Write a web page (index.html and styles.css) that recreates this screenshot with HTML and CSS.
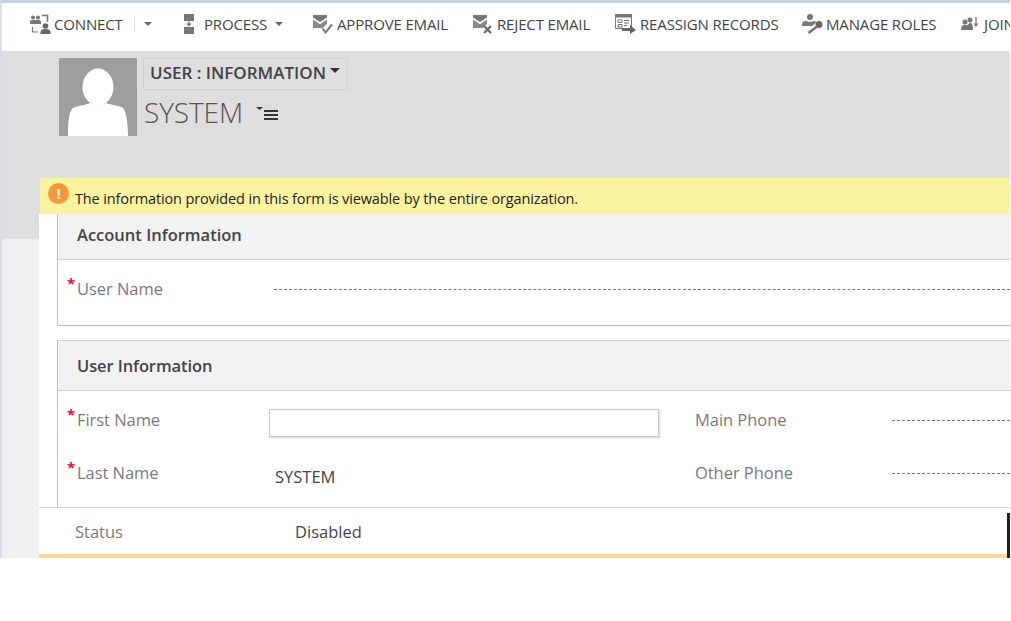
FILE: index.html
```html
<!DOCTYPE html>
<html lang="en">
<head>
<meta charset="utf-8">
<title>User: Information</title>
<link rel="stylesheet" href="styles.css">
</head>
<body>
<div class="app">
  <nav class="commandbar">
    <span class="cmd cmd-connect">
      <svg class="ico" width="21" height="20" viewBox="0 0 21 20"><circle cx="3" cy="3.500" r="2" fill="#777"/><circle cx="8" cy="3.500" r="2" fill="#777"/><path d="M0 10V8c0-1.500 1-2 3-2h5c2 0 3 .5 3 2v2z" fill="#777"/><circle cx="15.500" cy="12" r="2.800" fill="#666"/><path d="M10.500 20v-2c0-2 2-3 5-3s5 1 5 3v2z" fill="#666"/><path d="M12 1.500h5.500V8" fill="none" stroke="#777" stroke-width="1.600"/><path d="M8 18H2.500v-5" fill="none" stroke="#777" stroke-width="1.200"/></svg>
      CONNECT<span class="sep"></span><span class="caret"></span>
    </span>
    <span class="cmd cmd-process">
      <svg class="ico" width="10" height="20" viewBox="0 0 10 20"><rect x="0" y="0" width="10" height="7" fill="#777"/><rect x="0" y="13" width="10" height="7" fill="#777"/><path d="M5 7.500v3.500" stroke="#666" stroke-width="1.200"/><path d="M2.500 9.500h5L5 12.500z" fill="#666"/></svg>
      PROCESS<span class="caret caret-process"></span>
    </span>
    <span class="cmd cmd-approve">
      <svg class="ico" width="20" height="19" viewBox="0 0 20 19"><path d="M0 0h14v2.500L7 7 0 2.500z" fill="#777"/><path d="M0 4.500l7 4.500 7-4.500V9l-4.500 4H0z" fill="#888"/><path d="M9.500 13.500l3 4 6.500-8" fill="none" stroke="#777" stroke-width="2"/></svg>
      APPROVE EMAIL
    </span>
    <span class="cmd cmd-reject">
      <svg class="ico" width="20" height="19" viewBox="0 0 20 19"><path d="M0 0h14v2.500L7 7 0 2.500z" fill="#777"/><path d="M0 4.500l7 4.500 7-4.500V9l-4.500 4H0z" fill="#888"/><path d="M11 11l7 7M18 11l-7 7" fill="none" stroke="#666" stroke-width="2.200"/></svg>
      REJECT EMAIL
    </span>
    <span class="cmd cmd-reassign">
      <svg class="ico" width="21" height="20" viewBox="0 0 21 20"><path d="M.5.500h16v14H.5z" fill="#fff" stroke="#777"/><rect y="0" width="17" height="3.500" fill="#777"/><path d="M3 6h4v2.500H3zM3 10.500h4V13H3z" fill="none" stroke="#777"/><path d="M9 6.500h5M9 9h5M9 11.500h3" fill="none" stroke="#777"/><path d="M7 14.500h8V11l6 5-6 4v-3H7z" fill="#666"/></svg>
      REASSIGN RECORDS
    </span>
    <span class="cmd cmd-roles">
      <svg class="ico" width="21" height="20" viewBox="0 0 21 20"><circle cx="8" cy="3" r="3" fill="#777"/><path d="M0 12v-2c0-2 2-3 4-3 2 1 6 1 8 0 1 0 2 .5 2 1.500L10 12z" fill="#777"/><circle cx="17" cy="10.500" r="3.500" fill="#666"/><path d="M15 12.500l-8.500 6.500" stroke="#777" stroke-width="2.600"/></svg>
      MANAGE ROLES
    </span>
    <span class="cmd cmd-join">
      <svg class="ico" width="18" height="16" viewBox="0 0 18 16"><circle cx="4" cy="6" r="2.500" fill="#777"/><circle cx="9" cy="4" r="2.500" fill="#777"/><path d="M0 14c0-3 1-5 4-5 1 0 2 0 2 .5 1-1 2-2.500 3-2.500 2 0 3 2 3 7z" fill="#777"/><path d="M15 1v9" stroke="#777" stroke-width="1.300"/><path d="M12.500 7.500h5L15 11z" fill="#777"/></svg>
      JOIN TEAMS
    </span>
  </nav>

  <main class="workspace">
    <header class="record-head">
      <div class="avatar">
        <svg width="78" height="78" viewBox="0 0 78 78"><ellipse cx="39" cy="29" rx="15.500" ry="18.500" fill="#fff"/><path d="M9 78c0-14 1-25 5-28 6-3 13-3 17-5 4 2 12 2 16 0 5 2 12 2 17 5 3 3 5 14 5 28z" fill="#fff"/></svg>
      </div>
      <div class="record-title">
        <span class="form-select">USER : INFORMATION<span class="form-caret"></span></span>
        <div class="record-name">
          <span class="name-text">SYSTEM</span>
          <svg class="list-ico" width="23" height="13" viewBox="0 0 23 13"><path d="M0 0h7l-3.500 3z" fill="#333"/><path d="M8 3h14v2H8zM8 7h14v2H8zM8 11h14v2H8z" fill="#333"/></svg>
        </div>
      </div>
    </header>

    <div class="notice">
      <span class="notice-ico">!</span>
      <span class="notice-text">The information provided in this form is viewable by the entire organization.</span>
    </div>

    <div class="sheet">
      <div class="sheet-scroll">
        <section class="section section-account">
          <h2 class="section-title title-account">Account Information</h2>
          <div class="row row-account">
            <span class="req">*</span><span class="label">User Name</span>
            <span class="dashes dashes-user"></span>
          </div>
        </section>

        <section class="section section-user">
          <h2 class="section-title title-user">User Information</h2>
          <div class="grid">
            <div class="row">
              <span class="req">*</span><span class="label">First Name</span>
              <span class="textbox"></span>
            </div>
            <div class="row row-right">
              <span class="label label-right">Main Phone</span>
              <span class="dashes"></span>
            </div>
            <div class="row">
              <span class="req">*</span><span class="label">Last Name</span>
              <span class="value">SYSTEM</span>
            </div>
            <div class="row row-right">
              <span class="label label-right">Other Phone</span>
              <span class="dashes"></span>
            </div>
          </div>
        </section>
      </div>

      <footer class="statusbar">
        <span class="status-label">Status</span>
        <span class="status-value">Disabled</span>
        <span class="status-end"></span>
      </footer>
    </div>
  </main>
</div>
</body>
</html>
```

FILE: styles.css
```css
* { box-sizing: border-box; }
html, body { margin: 0; height: 100%; background: #fff; overflow: hidden; }
body { font-family: "Open Sans", "Noto Sans", sans-serif; color: #444; }

.app {
  width: 1010px;
  height: 558px;
  border-top: 3px solid #c5d0e3;
  border-left: 2px solid #d4deee;
  display: flex;
  flex-direction: column;
  overflow: hidden;
}

/* command bar */
.commandbar {
  height: 48px;
  flex: none;
  background: #fff;
  display: flex;
  align-items: center;
  padding: 0 0 6px 28px;
  white-space: nowrap;
  overflow: hidden;
  font-size: 15px;
  letter-spacing: -.15px;
  color: #444;
}
.cmd { display: inline-flex; align-items: center; flex: none; }
.ico { flex: none; margin-right: 3px; }
.cmd-connect { width: 154px; }
.cmd-process { width: 129px; }
.cmd-process .ico { margin-right: 10px; }
.cmd-approve { width: 160px; }
.cmd-approve .ico, .cmd-reject .ico, .cmd-reassign .ico { margin-right: 4px; }
.cmd-reject { width: 142px; }
.cmd-reassign { width: 187px; }
.cmd-roles { width: 159px; }
.cmd-join .ico { margin-right: 5px; }
.sep { width: 1px; height: 15px; background: #ddd; margin: 0 9px 0 11px; }
.caret { width: 0; height: 0; border: 4px solid transparent; border-top: 4px solid #666; border-bottom: 0; }
.caret-process { margin-left: 8px; }

/* workspace */
.workspace {
  flex: 1;
  min-height: 0;
  display: flex;
  flex-direction: column;
  background: linear-gradient(#dedede 188px, #f0f0f0 188px);
}
.record-head {
  height: 127px;
  flex: none;
  display: flex;
  padding: 7px 0 0 57px;
}
.avatar { width: 78px; height: 78px; background: #9e9e9e; flex: none; }
.avatar svg { display: block; }
.record-title { margin-left: 6px; }
.form-select {
  display: inline-flex;
  align-items: center;
  height: 32px;
  padding: 0 7px 3px 6px;
  border: 1px solid #d2d2d2;
  font-size: 17px;
  font-weight: 600;
  color: #444;
}
.form-caret { margin-left: 4px; margin-bottom: 4px; width: 0; height: 0; border: 5px solid transparent; border-top: 5px solid #333; border-bottom: 0; }
.record-name { display: flex; align-items: center; margin-top: 3px; padding-left: 1px; }
.name-text { font-size: 28px; font-weight: 300; color: #555; letter-spacing: -.1px; line-height: 38px; }
.list-ico { margin: 2px 0 0 13px; }

/* notice */
.notice {
  height: 36px;
  flex: none;
  margin-left: 38px;
  background: #fcf3a1;
  display: flex;
  align-items: center;
  padding-left: 8px;
  font-size: 14.500px;
  letter-spacing: -.13px;
  color: #222;
}
.notice-text { margin-top: 4px; }
.notice-ico {
  width: 21px;
  height: 21px;
  border-radius: 50%;
  background: #f8973a;
  color: #fff;
  font-weight: 700;
  font-size: 15px;
  display: flex;
  align-items: center;
  justify-content: center;
  margin-right: 6px;
  margin-top: -6px;
}

/* sheet */
.sheet {
  flex: 1;
  min-height: 0;
  margin-left: 37px;
  background: #fff;
  border-bottom: 4px solid #fad79b;
  display: flex;
  flex-direction: column;
}
.sheet-scroll { flex: 1; min-height: 0; overflow: hidden; padding-left: 18px; }
.section { border-left: 1px solid #bcc2c4; border-bottom: 1px solid #bcc2c4; }
.section-account { height: 112px; }
.section-user { margin-top: 14px; height: 170px; border-top: 1px solid #d0d0d0; }
.section-title {
  margin: 0;
  background: #f2f2f2;
  border-bottom: 1px solid #d2d2d2;
  padding-left: 19px;
  font-size: 16.500px;
  font-weight: 600;
  color: #444;
  display: flex;
  align-items: center;
}
.title-account { height: 46px; padding-bottom: 4px; }
.title-user { height: 50px; letter-spacing: -.1px; }

.row {
  height: 53px;
  display: flex;
  align-items: flex-start;
  padding: 18px 0 0 9px;
  font-size: 16.500px;
  letter-spacing: -.05px;
}
.row-account { height: 65px; }
.req { width: 10px; color: #e81123; font-weight: 700; font-size: 15px; line-height: 18px; flex: none; margin-top: -4px; }
.label { width: 187px; flex: none; color: #7a7a7a; line-height: 22px; }
.label-right { width: 197px; }
.row-right { padding-left: 0; }
.dashes { flex: 1; border-top: 1px dashed #777; margin-top: 11px; }
.dashes-user { margin-left: 10px; }
.textbox {
  width: 390px;
  height: 28px;
  flex: none;
  margin: 0 0 0 5px;
  background: #fff;
  border: 1px solid #c8c8c8;
  box-shadow: 1px 1px 2px rgba(0,0,0,.18);
}
.value { margin: 4px 0 0 11px; color: #444; line-height: 22px; letter-spacing: 0; }
.grid { display: grid; grid-template-columns: 637px 1fr; }

/* footer */
.statusbar {
  height: 47px;
  flex: none;
  border-top: 1px solid #d4d4d4;
  background: #fff;
  display: flex;
  align-items: center;
  padding: 0 0 0 36px;
  font-size: 16.500px;
}
.status-label { width: 220px; color: #7a7a7a; }
.status-value { color: #444; flex: 1; }
.status-end { width: 3px; height: 45px; background: #222; align-self: flex-end; margin-bottom: -4px; }
```
